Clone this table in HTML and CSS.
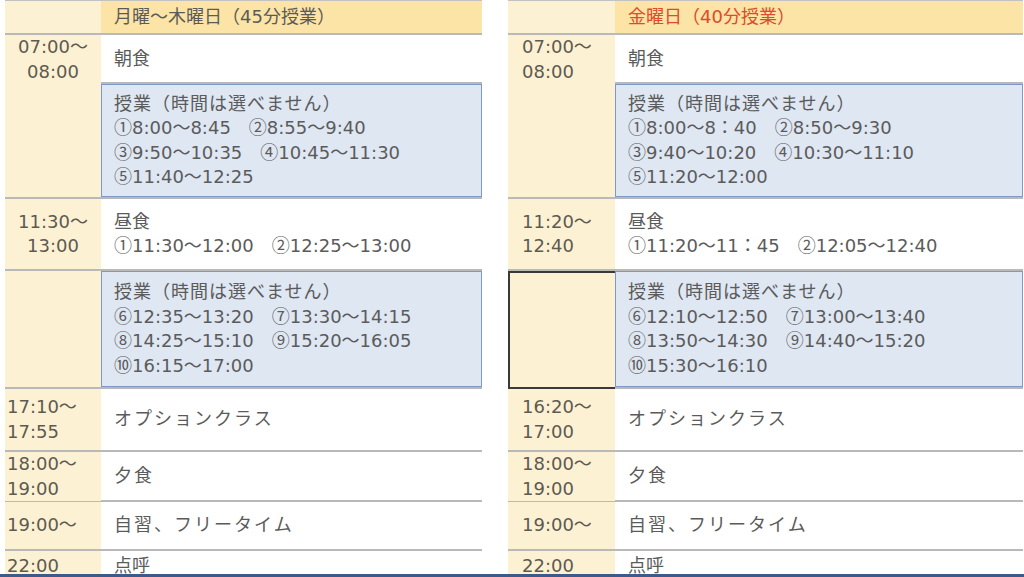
FILE: index.html
```html
<!DOCTYPE html>
<html lang="ja">

<head>
    <meta charset="UTF-8">
    <title>一日のスケジュール</title>
    <link rel="stylesheet" href="styles.css">
</head>

<body>

    <div class="page">
        <div class="tables">

            <!-- 月曜～木曜日 -->
            <div class="schedule mon">
                <div class="row r-head">
                    <div class="time"></div>
                    <div class="main head">月曜～木曜日（45分授業）</div>
                </div>
                <div class="row r-breakfast">
                    <div class="time center"><span>07:00～</span><span>08:00</span></div>
                    <div class="main">朝食</div>
                </div>
                <div class="row r-box1">
                    <div class="time"></div>
                    <div class="main box">
                        <span class="title">授業（時間は選べません）</span>
                        <span><i class="circ">①</i>8:00～8:45　<i class="circ">②</i>8:55～9:40</span>
                        <span><i class="circ">③</i>9:50～10:35　<i class="circ">④</i>10:45～11:30</span>
                        <span><i class="circ">⑤</i>11:40～12:25</span>
                    </div>
                </div>
                <div class="row r-lunch">
                    <div class="time center"><span>11:30～</span><span>13:00</span></div>
                    <div class="main">
                        <span>昼食</span>
                        <span><i class="circ">①</i>11:30～12:00　<i class="circ">②</i>12:25～13:00</span>
                    </div>
                </div>
                <div class="row r-box2">
                    <div class="time"></div>
                    <div class="main box">
                        <span class="title">授業（時間は選べません）</span>
                        <span><i class="circ">⑥</i>12:35～13:20　<i class="circ">⑦</i>13:30～14:15</span>
                        <span><i class="circ">⑧</i>14:25～15:10　<i class="circ">⑨</i>15:20～16:05</span>
                        <span><i class="circ">⑩</i>16:15～17:00</span>
                    </div>
                </div>
                <div class="row r-option">
                    <div class="time"><span>17:10～</span><span>17:55</span></div>
                    <div class="main wide">オプションクラス</div>
                </div>
                <div class="row r-dinner">
                    <div class="time"><span>18:00～</span><span>19:00</span></div>
                    <div class="main wide">夕食</div>
                </div>
                <div class="row r-free">
                    <div class="time"><span>19:00～</span></div>
                    <div class="main wide">自習、フリータイム</div>
                </div>
                <div class="row r-roll">
                    <div class="time"><span>22:00</span></div>
                    <div class="main">点呼</div>
                </div>
            </div>

            <!-- 金曜日 -->
            <div class="schedule fri">
                <div class="row r-head">
                    <div class="time"></div>
                    <div class="main head red">金曜日（40分授業）</div>
                </div>
                <div class="row r-breakfast">
                    <div class="time"><span>07:00～</span><span>08:00</span></div>
                    <div class="main">朝食</div>
                </div>
                <div class="row r-box1">
                    <div class="time"></div>
                    <div class="main box">
                        <span class="title">授業（時間は選べません）</span>
                        <span><i class="circ">①</i>8:00～8：40　<i class="circ">②</i>8:50～9:30</span>
                        <span><i class="circ">③</i>9:40～10:20　<i class="circ">④</i>10:30～11:10</span>
                        <span><i class="circ">⑤</i>11:20～12:00</span>
                    </div>
                </div>
                <div class="row r-lunch">
                    <div class="time"><span>11:20～</span><span>12:40</span></div>
                    <div class="main">
                        <span>昼食</span>
                        <span><i class="circ">①</i>11:20～11：45　<i class="circ">②</i>12:05～12:40</span>
                    </div>
                </div>
                <div class="row r-box2">
                    <div class="time outlined"></div>
                    <div class="main box">
                        <span class="title">授業（時間は選べません）</span>
                        <span><i class="circ">⑥</i>12:10～12:50　<i class="circ">⑦</i>13:00～13:40</span>
                        <span><i class="circ">⑧</i>13:50～14:30　<i class="circ">⑨</i>14:40～15:20</span>
                        <span><i class="circ">⑩</i>15:30～16:10</span>
                    </div>
                </div>
                <div class="row r-option">
                    <div class="time"><span>16:20～</span><span>17:00</span></div>
                    <div class="main wide">オプションクラス</div>
                </div>
                <div class="row r-dinner">
                    <div class="time"><span>18:00～</span><span>19:00</span></div>
                    <div class="main wide">夕食</div>
                </div>
                <div class="row r-free">
                    <div class="time"><span>19:00～</span></div>
                    <div class="main wide">自習、フリータイム</div>
                </div>
                <div class="row r-roll">
                    <div class="time"><span>22:00</span></div>
                    <div class="main">点呼</div>
                </div>
            </div>

        </div>
        <div class="rule"></div>
    </div>

</body>

</html>
```

FILE: styles.css
```css
body {
    margin: 0;
    font-family: "DejaVu Sans", "Noto Sans CJK JP", sans-serif;
    font-size: 18px;
    color: #5b5b5b;
    background: #fff;
    overflow: hidden;
}

.page {
    width: 1024px;
    height: 577px;
    display: flex;
    flex-direction: column;
}

.tables {
    flex: 1;
    min-height: 0;
    display: flex;
    gap: 26px;
    padding: 0 1px 0 5px;
}

.schedule {
    display: flex;
    flex-direction: column;
    border-top: 1px solid #c2c2c2;
}

.schedule.mon {
    width: 477px;
    --time: 96px;
}

.schedule.fri {
    flex: 1;
    --time: 107px;
}

.row {
    display: grid;
    grid-template-columns: var(--time) 1fr;
    border-bottom: 2px solid #b9b9b9;
    box-sizing: border-box;
}

.r-head { height: 34px; }
.r-breakfast { height: 49px; }
.r-box1 { height: 115px; }
.r-lunch { height: 72px; }
.r-box2 { height: 118px; }
.r-option { height: 63px; }
.r-dinner { height: 50px; }
.r-free { height: 49px; }
.r-roll { height: 23px; border-bottom: none; }

.time,
.main {
    display: flex;
    flex-direction: column;
    justify-content: center;
    line-height: 24.5px;
}

.time > span,
.main > span {
    display: block;
    height: 24.5px;
}

.time {
    background: #fdf1d3;
    color: #5d5a52;
    padding-left: 2px;
}

.fri .time {
    padding-left: 14px;
}

.time.center {
    align-items: center;
    padding-left: 0;
}

.time.outlined {
    border: 2px solid #3a3a3a;
    border-right: none;
    margin-bottom: -2px;
}

.main {
    padding-left: 13px;
    white-space: nowrap;
    overflow: hidden;
}

.main.head {
    background: #fbe4a5;
}

.main.red {
    color: #e0492b;
}

.main.box {
    background: #dfe7f3;
    border: 1.5px solid #8098c6;
    padding-left: 12px;
}

.main.wide {
    letter-spacing: 2px;
}

.title {
    letter-spacing: 1px;
}

.circ {
    font-style: normal;
    font-family: "Noto Sans CJK JP", sans-serif;
    line-height: 1;
}

.r-roll .time,
.r-roll .main {
    padding-top: 3px;
}

.rule {
    height: 3px;
    background: #3d5a8b;
}
```
